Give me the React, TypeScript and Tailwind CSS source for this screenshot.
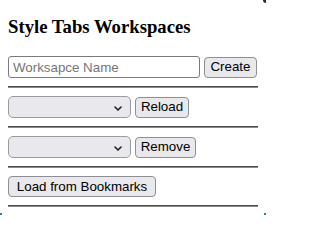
import React from "react"

const sans = "font-['Helvetica','Liberation_Sans',Arial,sans-serif]"

function Chevron() {
  return (
    <svg width="8" height="5" viewBox="0 0 8 5" className="absolute right-[8px] top-[9px]">
      <path d="M1 1 L4 4 L7 1" fill="none" stroke="#1f1f1f" strokeWidth="1.6" strokeLinecap="round" strokeLinejoin="round" />
    </svg>
  )
}

function Btn({ label, width }: { label: string; width: string }) {
  return (
    <button
      className={`${width} h-[21px] rounded-[4px] border border-[#8e8e93] bg-[#e9e9ed] text-[13.33px] leading-none text-black ${sans} flex items-center justify-center`}
    >
      {label}
    </button>
  )
}

function SelectBox() {
  return (
    <div className="relative w-[123px] h-[22px] rounded-[5px] border border-[#9a9aa2] bg-[#e9e9ed]">
      <Chevron />
    </div>
  )
}

function Rule() {
  return <div className="my-[8px] h-[2px] w-full border-t border-[#4a4a4a] border-b border-b-[#8a8a8a] bg-[#5a5a5a]" />
}

export default function App() {
  return (
    <div className="relative w-[266px] h-[215px] bg-white overflow-hidden">
      <div className="px-[8px] pt-[16px]">
        <h3 className="font-['Times_New_Roman','Liberation_Serif',serif] font-bold text-[18.72px] leading-[21px] text-black">
          Style Tabs Workspaces
        </h3>

        <div className="mt-[19px] flex items-center gap-[4px]">
          <input
            placeholder="Worksapce Name"
            className={`w-[192px] h-[22px] rounded-[3px] border border-[#7a7a80] px-[4px] text-[13.33px] ${sans} placeholder:text-[#757575] outline-none`}
          />
          <Btn label="Create" width="w-[53px]" />
        </div>
        <Rule />

        <div className="flex items-center gap-[4px]">
          <SelectBox />
          <Btn label="Reload" width="w-[54px]" />
        </div>
        <Rule />

        <div className="flex items-center gap-[4px]">
          <SelectBox />
          <Btn label="Remove" width="w-[61px]" />
        </div>
        <Rule />

        <div className="flex items-center">
          <Btn label="Load from Bookmarks" width="w-[148px]" />
        </div>
        <Rule />
      </div>

      {/* window corner bits */}
      <div className="absolute right-0 top-0 w-[3px] h-[3px] bg-[#2a2a2a] rounded-bl-[3px]" />
      <div className="absolute left-0 bottom-0 w-[2px] h-[2px] bg-[#2a7fa8]" />
      <div className="absolute right-0 bottom-0 w-[2px] h-[2px] bg-[#2a7fa8]" />
    </div>
  )
}
